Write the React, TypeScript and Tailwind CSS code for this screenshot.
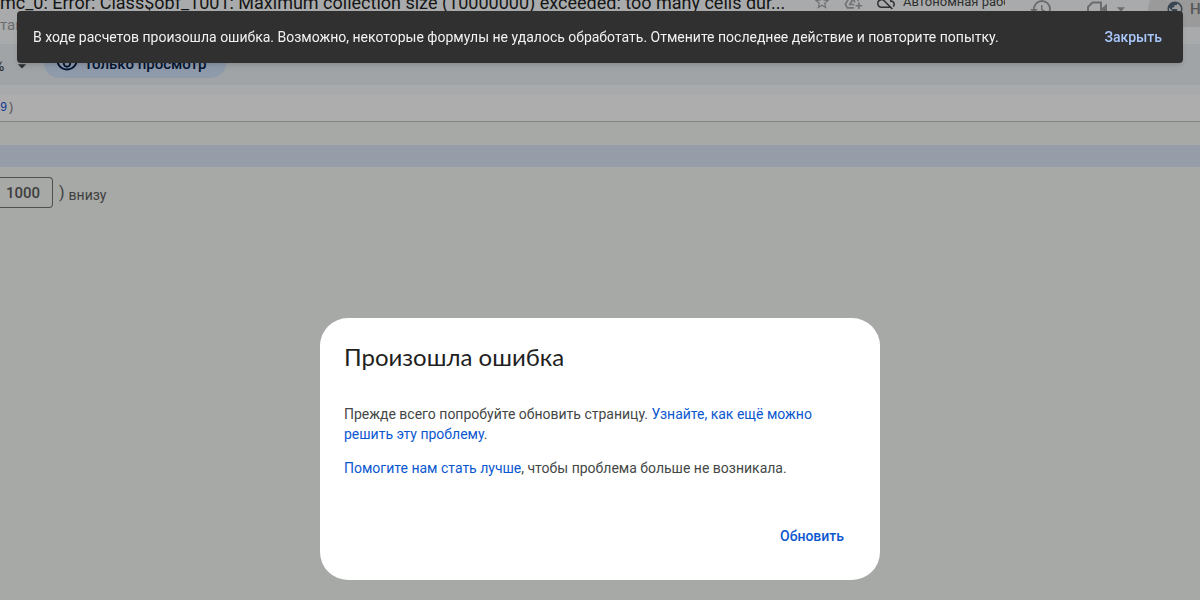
import { MdArrowDropDown, MdHistory, MdOutlineCloudOff, MdOutlineVisibility, MdPublic, MdStarBorder } from "react-icons/md";

function DriveAddIcon() {
  return (
    <svg viewBox="0 0 24 24" className="h-5 w-5" fill="none" stroke="currentColor" strokeWidth="2">
      <path d="M13 19H5.2L2.8 14.8 9.2 3.8H14.6L18.6 10.6" />
      <path d="M13.5 15H8.2L12 8.4 14.4 12.4" />
      <path d="M19 12.5V20.5M15 16.5H23" />
    </svg>
  );
}

function MeetIcon() {
  return (
    <svg viewBox="0 0 24 24" className="h-6 w-6" fill="none" stroke="currentColor" strokeWidth="2">
      <path d="M7.5 5.5H16V18.5H3V10Z" />
      <path d="M17 11L22 6.5V17.5L17 13Z" fill="currentColor" stroke="none" />
    </svg>
  );
}

function Header() {
  return (
    <header className="h-11 overflow-hidden bg-[#f9fbfd]">
      <div className="-mt-3.5 flex justify-between">
        <div className="flex flex-col">
          <div className="flex h-8 items-center">
            <h1 className="w-[790px] whitespace-nowrap pt-0.5 text-lg text-[#1f1f1f]">
              mc_0: Error: Class$obf_1001: Maximum collection size (10000000) exceeded: too many cells dur...
            </h1>
            <button aria-label="Пометить" className="ml-[23px] text-[#a8a8a8]">
              <MdStarBorder className="h-[18px] w-[18px]" />
            </button>
            <button aria-label="Добавить на Диск" className="ml-3 text-[#a8a8a8]">
              <DriveAddIcon />
            </button>
            <button aria-label="Состояние документа" className="ml-3.5 flex items-center gap-2 text-[#444746]">
              <MdOutlineCloudOff className="h-[18px] w-[18px]" />
              <span className="w-[102px] overflow-hidden whitespace-nowrap text-left text-[13px]">
                Автономная работа
              </span>
            </button>
          </div>
          <nav className="flex h-3.5 items-center text-[15px] text-[#a0a0a0]">
            <button>тавка</button>
          </nav>
        </div>
        <div className="flex h-[46px] items-center text-[#a0a0a0]">
          <button aria-label="История версий">
            <MdHistory className="h-6 w-6" />
          </button>
          <button aria-label="Видеовстреча" className="ml-8 flex items-center">
            <MeetIcon />
            <MdArrowDropDown className="ml-0.5 h-5 w-5" />
          </button>
          <button className="ml-[17px] flex h-9 w-[52px] items-center gap-1.5 overflow-hidden rounded-l-full bg-[#e4e4e4] pl-[18px] text-[#808080]">
            <MdPublic className="h-[18px] w-[18px] shrink-0 text-[#56667d]" />
            <span className="text-[15px] font-medium">Н</span>
          </button>
        </div>
      </div>
    </header>
  );
}

function Toolbar() {
  return (
    <div className="flex h-[41px] items-start bg-[#ecf2f7] pt-1 text-[#444746]">
      <button className="flex h-9 w-8 items-center justify-between">
        <span className="-ml-1.5 text-sm font-medium">%</span>
        <MdArrowDropDown className="h-5 w-5" />
      </button>
      <button className="ml-3 flex h-[30px] items-center gap-1.5 rounded-full bg-[#d3e3fd] pl-3 pr-5 pt-0.5 text-[15px] font-medium text-[#041e49]">
        <MdOutlineVisibility className="h-[22px] w-[22px]" />
        Только просмотр
      </button>
    </div>
  );
}

function Sheet() {
  return (
    <main className="grow bg-[#f6f9f6]">
      <div className="mt-[23px] h-[22px] bg-[#dee8f8]" />
      <div className="flex items-center pt-2.5 text-[#5c5e5c]">
        <input
          aria-label="Количество строк"
          defaultValue="1000"
          className="h-[31px] w-[53px] rounded-r border border-l-0 border-[#747775] pl-1.5 text-[15px] font-medium"
        />
        <label className="ml-1.5 flex items-center gap-1">
          <span>)</span>
          <span className="pt-1 text-sm">внизу</span>
        </label>
      </div>
    </main>
  );
}

function Toast() {
  return (
    <div
      role="alert"
      className="fixed inset-x-[17px] top-[11px] flex h-[52px] items-center justify-between rounded bg-[#303030] pl-4 pr-[21px] text-sm text-[#f2f2f2] shadow-md"
    >
      <span>
        В ходе расчетов произошла ошибка. Возможно, некоторые формулы не удалось обработать. Отмените последнее
        действие и повторите попытку.
      </span>
      <button className="font-medium text-[#a8c7fa]">Закрыть</button>
    </div>
  );
}

function ErrorDialog() {
  return (
    <div className="fixed inset-0 flex items-end justify-center bg-black/32 pb-5">
      <div role="dialog" aria-labelledby="error-title" className="w-[560px] rounded-[28px] bg-white px-6 pb-[26px] pt-[23px]">
        <h2 id="error-title" className="font-['Lato',sans-serif] text-2xl text-[#1f1f1f]">
          Произошла ошибка
        </h2>
        <div className="mt-[31px] space-y-3.5 text-sm text-[#444746]">
          <p>
            Прежде всего попробуйте обновить страницу.{" "}
            <a href="#help" className="text-[#0b57d0]">
              Узнайте, как ещё можно решить эту проблему
            </a>
            .
          </p>
          <p>
            <a href="#feedback" className="text-[#0b57d0]">
              Помогите нам стать лучше
            </a>
            , чтобы проблема больше не возникала.
          </p>
        </div>
        <div className="mt-10 flex justify-end">
          <button className="h-9 px-3 text-sm font-medium text-[#0b57d0]">Обновить</button>
        </div>
      </div>
    </div>
  );
}

export default function App() {
  return (
    <div className="flex min-h-screen flex-col overflow-x-hidden bg-[#f9fbfd] font-['Roboto',sans-serif]">
      <Header />
      <Toolbar />
      <div className="mt-2.5 flex h-[27px] items-center border-b border-[#c0c0c0] bg-white font-['Liberation_Mono',monospace] text-xs text-[#7a7a7a]">
        <span className="text-[#1a56db]">9</span>
        <span>)</span>
      </div>
      <Sheet />
      <ErrorDialog />
      <Toast />
    </div>
  );
}
